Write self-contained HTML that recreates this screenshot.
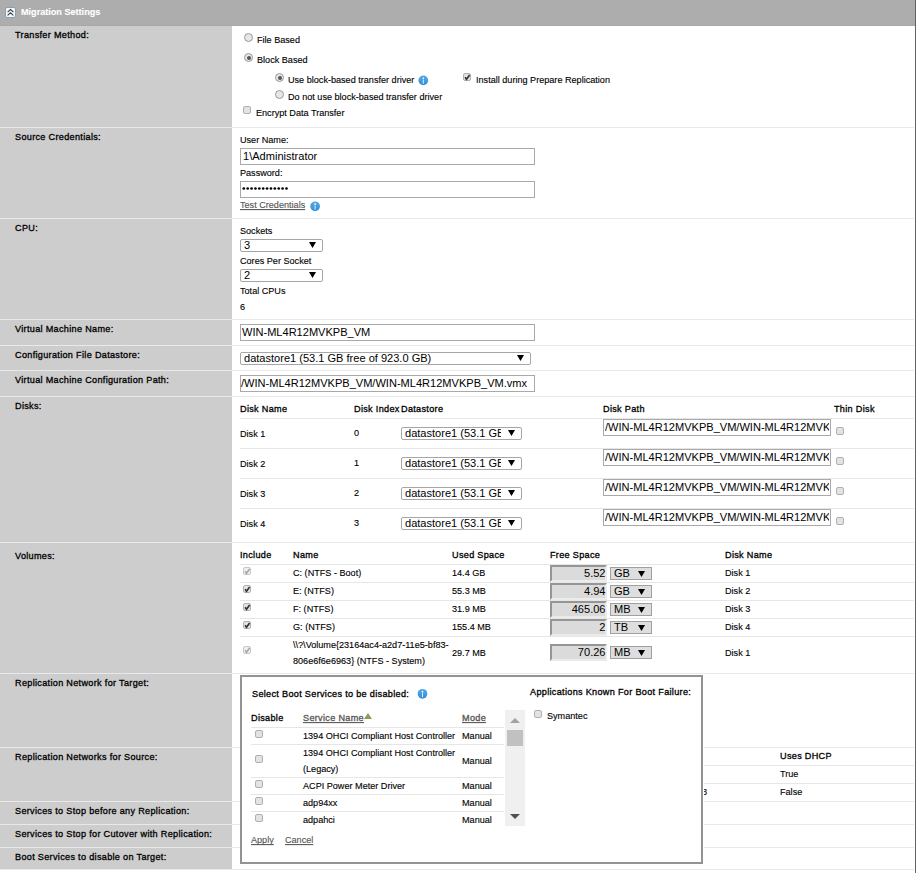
<!DOCTYPE html><html><head><meta charset="utf-8"><style>
html,body{margin:0;padding:0;background:#fff;}
body{width:916px;height:873px;position:relative;overflow:hidden;font-family:"Liberation Sans",sans-serif;}
.a{position:absolute;}
.t{position:absolute;font-size:9.1px;line-height:12px;white-space:nowrap;color:#000;-webkit-text-stroke:0.12px currentColor;transform:scaleY(1.06);transform-origin:0 9px;}
.t2{position:absolute;font-size:11.05px;line-height:13px;white-space:nowrap;color:#000;}
.rad{position:absolute;width:9px;height:9px;box-sizing:border-box;border:1px solid #9a9a9a;border-radius:50%;background:#e6e6e6;}
.rad i{position:absolute;left:1.5px;top:1.5px;width:4px;height:4px;border-radius:50%;background:#555;}
.cb{position:absolute;width:8px;height:8px;box-sizing:border-box;border:1px solid #b0b0b0;border-radius:2px;background:#e3e3e3;}
.cb svg{position:absolute;left:-1px;top:-1px;}
.cb.dis{border-color:#c8c8c8;background:#efefef;}
.info{position:absolute;width:10px;height:10px;}
.info svg{display:block}
.arr{position:absolute;width:7px;height:6px;}
.b{-webkit-text-stroke:0.3px currentColor;letter-spacing:0.32px;}
.u{text-decoration:underline;text-decoration-skip-ink:none;}
</style></head><body>
<div class="a" style="left:0px;top:0px;width:915px;height:26px;background:#adadad"></div>
<div class="a" style="left:0px;top:25px;width:915px;height:1px;background:#a8a8a8"></div>
<div class="a" style="left:5px;top:7px;width:11px;height:11px;box-sizing:border-box;border:1px solid #8aa0b0;border-radius:2px;background:#f2f7fb"><svg width="9" height="9" viewBox="0 0 9 9" style="position:absolute;left:0;top:0"><path d="M1.6 4.2 L4.5 1.6 L7.4 4.2 M1.6 7.4 L4.5 4.8 L7.4 7.4" fill="none" stroke="#404040" stroke-width="1.1"/></svg></div>
<div class="t" style="left:21px;top:6px;color:#fff;font-weight:bold">Migration Settings</div>
<div class="a" style="left:0px;top:26px;width:232px;height:843px;background:#cdcdcd"></div>
<div class="a" style="left:915px;top:0px;width:1px;height:873px;background:#616161"></div>
<div class="a" style="left:0px;top:127px;width:914px;height:1px;background:#e9e9e9"></div>
<div class="a" style="left:0px;top:218px;width:914px;height:1px;background:#e9e9e9"></div>
<div class="a" style="left:0px;top:319px;width:914px;height:1px;background:#e9e9e9"></div>
<div class="a" style="left:0px;top:345px;width:914px;height:1px;background:#e9e9e9"></div>
<div class="a" style="left:0px;top:370px;width:914px;height:1px;background:#e9e9e9"></div>
<div class="a" style="left:0px;top:396px;width:914px;height:1px;background:#e9e9e9"></div>
<div class="a" style="left:0px;top:542px;width:914px;height:1px;background:#e9e9e9"></div>
<div class="a" style="left:0px;top:673px;width:914px;height:1px;background:#e9e9e9"></div>
<div class="a" style="left:0px;top:747px;width:914px;height:1px;background:#e9e9e9"></div>
<div class="a" style="left:0px;top:801px;width:914px;height:1px;background:#e9e9e9"></div>
<div class="a" style="left:0px;top:824px;width:914px;height:1px;background:#e9e9e9"></div>
<div class="a" style="left:0px;top:847px;width:914px;height:1px;background:#e9e9e9"></div>
<div class="a" style="left:0px;top:869px;width:914px;height:1px;background:#e9e9e9"></div>
<div class="t b" style="left:15px;top:29px;">Transfer Method:</div>
<div class="t b" style="left:15px;top:131px;">Source Credentials:</div>
<div class="t b" style="left:15px;top:222px;">CPU:</div>
<div class="t b" style="left:15px;top:323px;">Virtual Machine Name:</div>
<div class="t b" style="left:15px;top:349px;">Configuration File Datastore:</div>
<div class="t b" style="left:15px;top:374px;">Virtual Machine Configuration Path:</div>
<div class="t b" style="left:15px;top:400px;">Disks:</div>
<div class="t b" style="left:15px;top:550px;">Volumes:</div>
<div class="t b" style="left:15px;top:677px;">Replication Network for Target:</div>
<div class="t b" style="left:15px;top:751px;">Replication Networks for Source:</div>
<div class="t b" style="left:15px;top:805px;">Services to Stop before any Replication:</div>
<div class="t b" style="left:15px;top:828px;">Services to Stop for Cutover with Replication:</div>
<div class="t b" style="left:15px;top:851px;">Boot Services to disable on Target:</div>
<div class="rad" style="left:244px;top:33px"></div>
<div class="t" style="left:257px;top:34px;">File Based</div>
<div class="rad" style="left:244px;top:53px"><i></i></div>
<div class="t" style="left:257px;top:54px;">Block Based</div>
<div class="rad" style="left:275px;top:73px"><i></i></div>
<div class="t" style="left:288px;top:74px;">Use block-based transfer driver</div>
<svg class="a" style="left:417px;top:74px" width="12" height="12" viewBox="0 0 12 12"><defs><linearGradient id="ig1" x1="0" y1="0" x2="0" y2="1"><stop offset="0" stop-color="#5aa9e4"/><stop offset="1" stop-color="#2f8fd8"/></linearGradient></defs><circle cx="6.30" cy="6.40" r="4.85" fill="url(#ig1)"/><circle cx="6.30" cy="4.30" r="0.85" fill="#fff"/><rect x="5.80" y="5.80" width="1" height="3.9" fill="#fff" fill-opacity="0.85"/></svg>
<div class="cb" style="left:463px;top:73px"><svg width="8" height="8" viewBox="0 0 8 8"><path d="M2.1 4.3 L3.5 6.3 L6.6 2.0" fill="none" stroke="#333" stroke-width="1.6"/></svg></div>
<div class="t" style="left:476px;top:74px;">Install during Prepare Replication</div>
<div class="rad" style="left:275px;top:90px"></div>
<div class="t" style="left:288px;top:91px;">Do not use block-based transfer driver</div>
<div class="cb" style="left:243px;top:106px"></div>
<div class="t" style="left:256px;top:107px;">Encrypt Data Transfer</div>
<div class="t" style="left:240px;top:134px;">User Name:</div>
<div class="a" style="left:240px;top:148px;width:295px;height:17px;border:1px solid #a9a9a9;box-sizing:border-box;background:#fff"></div>
<div class="t2" style="left:243px;top:150px;">1\Administrator</div>
<div class="t" style="left:240px;top:167px;">Password:</div>
<div class="a" style="left:240px;top:181px;width:295px;height:17px;border:1px solid #a9a9a9;box-sizing:border-box;background:#fff"></div>
<svg class="a" style="left:240px;top:184px" width="60" height="9"><circle cx="3.80" cy="4.5" r="1.35" fill="#000"/><circle cx="7.68" cy="4.5" r="1.35" fill="#000"/><circle cx="11.56" cy="4.5" r="1.35" fill="#000"/><circle cx="15.44" cy="4.5" r="1.35" fill="#000"/><circle cx="19.32" cy="4.5" r="1.35" fill="#000"/><circle cx="23.20" cy="4.5" r="1.35" fill="#000"/><circle cx="27.08" cy="4.5" r="1.35" fill="#000"/><circle cx="30.96" cy="4.5" r="1.35" fill="#000"/><circle cx="34.84" cy="4.5" r="1.35" fill="#000"/><circle cx="38.72" cy="4.5" r="1.35" fill="#000"/><circle cx="42.60" cy="4.5" r="1.35" fill="#000"/><circle cx="46.48" cy="4.5" r="1.35" fill="#000"/></svg>
<div class="t u" style="left:240px;top:199px;color:#555;">Test Credentials</div>
<svg class="a" style="left:309px;top:200px" width="12" height="12" viewBox="0 0 12 12"><defs><linearGradient id="ig2" x1="0" y1="0" x2="0" y2="1"><stop offset="0" stop-color="#5aa9e4"/><stop offset="1" stop-color="#2f8fd8"/></linearGradient></defs><circle cx="6.10" cy="6.25" r="4.85" fill="url(#ig2)"/><circle cx="6.10" cy="4.15" r="0.85" fill="#fff"/><rect x="5.60" y="5.65" width="1" height="3.9" fill="#fff" fill-opacity="0.85"/></svg>
<div class="t" style="left:240px;top:225px;">Sockets</div>
<div class="a" style="left:240px;top:239px;width:83px;height:13px;border:1px solid #a6a6a6;box-sizing:border-box;background:#fff;border-radius:2px"></div>
<div class="t2" style="left:244px;top:239px;">3</div>
<svg class="arr" style="left:309px;top:242px" viewBox="0 0 7 6"><path d="M0 0H7L3.5 6Z" fill="#000"/></svg>
<div class="t" style="left:240px;top:255px;">Cores Per Socket</div>
<div class="a" style="left:240px;top:269px;width:83px;height:13px;border:1px solid #a6a6a6;box-sizing:border-box;background:#fff;border-radius:2px"></div>
<div class="t2" style="left:244px;top:269px;">2</div>
<svg class="arr" style="left:309px;top:272px" viewBox="0 0 7 6"><path d="M0 0H7L3.5 6Z" fill="#000"/></svg>
<div class="t" style="left:240px;top:285px;">Total CPUs</div>
<div class="t" style="left:240px;top:301px;">6</div>
<div class="a" style="left:240px;top:324px;width:295px;height:17px;border:1px solid #a9a9a9;box-sizing:border-box;background:#fff"></div>
<div class="t2" style="left:242px;top:326px;">WIN-ML4R12MVKPB_VM</div>
<div class="a" style="left:240px;top:352px;width:291px;height:13px;border:1px solid #a6a6a6;box-sizing:border-box;background:#fff;border-radius:2px"></div>
<div class="t2" style="left:244px;top:352px;">datastore1 (53.1 GB free of 923.0 GB)</div>
<svg class="arr" style="left:517px;top:355px" viewBox="0 0 7 6"><path d="M0 0H7L3.5 6Z" fill="#000"/></svg>
<div class="a" style="left:240px;top:375px;width:295px;height:17px;border:1px solid #a9a9a9;box-sizing:border-box;background:#fff"></div>
<div class="t2" style="left:241px;top:377px;">/WIN-ML4R12MVKPB_VM/WIN-ML4R12MVKPB_VM.vmx</div>
<div class="t b" style="left:240px;top:403px;">Disk Name</div>
<div class="t b" style="left:354px;top:403px;">Disk Index</div>
<div class="t b" style="left:401px;top:403px;">Datastore</div>
<div class="t b" style="left:603px;top:403px;">Disk Path</div>
<div class="t b" style="left:834px;top:403px;">Thin Disk</div>
<div class="a" style="left:240px;top:418px;width:674px;height:1px;background:#e6e6e6"></div>
<div class="t" style="left:240px;top:428px;">Disk 1</div>
<div class="t" style="left:354px;top:427px;">0</div>
<div class="a" style="left:401px;top:427px;width:121px;height:13px;border:1px solid #a6a6a6;box-sizing:border-box;background:#fff;border-radius:2px"></div>
<div class="t2" style="left:405px;top:427px;width:96px;overflow:hidden;">datastore1 (53.1 GB</div>
<svg class="arr" style="left:508px;top:430px" viewBox="0 0 7 6"><path d="M0 0H7L3.5 6Z" fill="#000"/></svg>
<div class="a" style="left:603px;top:419px;width:228px;height:17px;border:1px solid #a9a9a9;box-sizing:border-box;background:#fff"></div>
<div class="t2" style="left:605px;top:421px;width:224px;overflow:hidden">/WIN-ML4R12MVKPB_VM/WIN-ML4R12MVKPB_VM.vmx</div>
<div class="cb" style="left:836px;top:427px"></div>
<div class="a" style="left:240px;top:448px;width:674px;height:1px;background:#e6e6e6"></div>
<div class="t" style="left:240px;top:458px;">Disk 2</div>
<div class="t" style="left:354px;top:457px;">1</div>
<div class="a" style="left:401px;top:457px;width:121px;height:13px;border:1px solid #a6a6a6;box-sizing:border-box;background:#fff;border-radius:2px"></div>
<div class="t2" style="left:405px;top:457px;width:96px;overflow:hidden;">datastore1 (53.1 GB</div>
<svg class="arr" style="left:508px;top:460px" viewBox="0 0 7 6"><path d="M0 0H7L3.5 6Z" fill="#000"/></svg>
<div class="a" style="left:603px;top:449px;width:228px;height:17px;border:1px solid #a9a9a9;box-sizing:border-box;background:#fff"></div>
<div class="t2" style="left:605px;top:451px;width:224px;overflow:hidden">/WIN-ML4R12MVKPB_VM/WIN-ML4R12MVKPB_VM.vmx</div>
<div class="cb" style="left:836px;top:457px"></div>
<div class="a" style="left:240px;top:478px;width:674px;height:1px;background:#e6e6e6"></div>
<div class="t" style="left:240px;top:488px;">Disk 3</div>
<div class="t" style="left:354px;top:487px;">2</div>
<div class="a" style="left:401px;top:487px;width:121px;height:13px;border:1px solid #a6a6a6;box-sizing:border-box;background:#fff;border-radius:2px"></div>
<div class="t2" style="left:405px;top:487px;width:96px;overflow:hidden;">datastore1 (53.1 GB</div>
<svg class="arr" style="left:508px;top:490px" viewBox="0 0 7 6"><path d="M0 0H7L3.5 6Z" fill="#000"/></svg>
<div class="a" style="left:603px;top:479px;width:228px;height:17px;border:1px solid #a9a9a9;box-sizing:border-box;background:#fff"></div>
<div class="t2" style="left:605px;top:481px;width:224px;overflow:hidden">/WIN-ML4R12MVKPB_VM/WIN-ML4R12MVKPB_VM.vmx</div>
<div class="cb" style="left:836px;top:487px"></div>
<div class="a" style="left:240px;top:508px;width:674px;height:1px;background:#e6e6e6"></div>
<div class="t" style="left:240px;top:518px;">Disk 4</div>
<div class="t" style="left:354px;top:517px;">3</div>
<div class="a" style="left:401px;top:517px;width:121px;height:13px;border:1px solid #a6a6a6;box-sizing:border-box;background:#fff;border-radius:2px"></div>
<div class="t2" style="left:405px;top:517px;width:96px;overflow:hidden;">datastore1 (53.1 GB</div>
<svg class="arr" style="left:508px;top:520px" viewBox="0 0 7 6"><path d="M0 0H7L3.5 6Z" fill="#000"/></svg>
<div class="a" style="left:603px;top:509px;width:228px;height:17px;border:1px solid #a9a9a9;box-sizing:border-box;background:#fff"></div>
<div class="t2" style="left:605px;top:511px;width:224px;overflow:hidden">/WIN-ML4R12MVKPB_VM/WIN-ML4R12MVKPB_VM.vmx</div>
<div class="cb" style="left:836px;top:517px"></div>
<div class="t b" style="left:240px;top:549px;">Include</div>
<div class="t b" style="left:293px;top:549px;">Name</div>
<div class="t b" style="left:452px;top:549px;">Used Space</div>
<div class="t b" style="left:550px;top:549px;">Free Space</div>
<div class="t b" style="left:725px;top:549px;">Disk Name</div>
<div class="a" style="left:240px;top:564px;width:674px;height:1px;background:#e6e6e6"></div>
<div class="cb dis" style="left:243px;top:567px"><svg width="8" height="8" viewBox="0 0 8 8"><path d="M2.1 4.3 L3.5 6.3 L6.6 2.0" fill="none" stroke="#a8a8a8" stroke-width="1.6"/></svg></div>
<div class="t" style="left:293px;top:567px;">C: (NTFS - Boot)</div>
<div class="t" style="left:452px;top:567px;">14.4 GB</div>
<div class="a" style="left:550px;top:565px;width:57px;height:17px;background:#dbdbdb;border-top:2px solid #959595;border-left:2px solid #959595;border-right:2px solid #ebebeb;border-bottom:2px solid #ebebeb;box-sizing:border-box"></div>
<div class="t2" style="left:550px;top:567px;width:55.5px;text-align:right">5.52</div>
<div class="a" style="left:610px;top:567px;width:42px;height:13px;background:#dedede;border:1px solid #a0a0a0;box-sizing:border-box"></div>
<div class="t2" style="left:614px;top:567px;">GB</div>
<svg class="arr" style="left:638px;top:571px" viewBox="0 0 7 6"><path d="M0 0H7L3.5 6Z" fill="#000"/></svg>
<div class="t" style="left:725px;top:567px;">Disk 1</div>
<div class="a" style="left:240px;top:582px;width:674px;height:1px;background:#e6e6e6"></div>
<div class="cb" style="left:243px;top:585px"><svg width="8" height="8" viewBox="0 0 8 8"><path d="M2.1 4.3 L3.5 6.3 L6.6 2.0" fill="none" stroke="#333" stroke-width="1.6"/></svg></div>
<div class="t" style="left:293px;top:585px;">E: (NTFS)</div>
<div class="t" style="left:452px;top:585px;">55.3 MB</div>
<div class="a" style="left:550px;top:583px;width:57px;height:17px;background:#dbdbdb;border-top:2px solid #959595;border-left:2px solid #959595;border-right:2px solid #ebebeb;border-bottom:2px solid #ebebeb;box-sizing:border-box"></div>
<div class="t2" style="left:550px;top:585px;width:55.5px;text-align:right">4.94</div>
<div class="a" style="left:610px;top:585px;width:42px;height:13px;background:#dedede;border:1px solid #a0a0a0;box-sizing:border-box"></div>
<div class="t2" style="left:614px;top:585px;">GB</div>
<svg class="arr" style="left:638px;top:589px" viewBox="0 0 7 6"><path d="M0 0H7L3.5 6Z" fill="#000"/></svg>
<div class="t" style="left:725px;top:585px;">Disk 2</div>
<div class="a" style="left:240px;top:600px;width:674px;height:1px;background:#e6e6e6"></div>
<div class="cb" style="left:243px;top:603px"><svg width="8" height="8" viewBox="0 0 8 8"><path d="M2.1 4.3 L3.5 6.3 L6.6 2.0" fill="none" stroke="#333" stroke-width="1.6"/></svg></div>
<div class="t" style="left:293px;top:603px;">F: (NTFS)</div>
<div class="t" style="left:452px;top:603px;">31.9 MB</div>
<div class="a" style="left:550px;top:601px;width:57px;height:17px;background:#dbdbdb;border-top:2px solid #959595;border-left:2px solid #959595;border-right:2px solid #ebebeb;border-bottom:2px solid #ebebeb;box-sizing:border-box"></div>
<div class="t2" style="left:550px;top:603px;width:55.5px;text-align:right">465.06</div>
<div class="a" style="left:610px;top:603px;width:42px;height:13px;background:#dedede;border:1px solid #a0a0a0;box-sizing:border-box"></div>
<div class="t2" style="left:614px;top:603px;">MB</div>
<svg class="arr" style="left:638px;top:607px" viewBox="0 0 7 6"><path d="M0 0H7L3.5 6Z" fill="#000"/></svg>
<div class="t" style="left:725px;top:603px;">Disk 3</div>
<div class="a" style="left:240px;top:618px;width:674px;height:1px;background:#e6e6e6"></div>
<div class="cb" style="left:243px;top:621px"><svg width="8" height="8" viewBox="0 0 8 8"><path d="M2.1 4.3 L3.5 6.3 L6.6 2.0" fill="none" stroke="#333" stroke-width="1.6"/></svg></div>
<div class="t" style="left:293px;top:621px;">G: (NTFS)</div>
<div class="t" style="left:452px;top:621px;">155.4 MB</div>
<div class="a" style="left:550px;top:619px;width:57px;height:17px;background:#dbdbdb;border-top:2px solid #959595;border-left:2px solid #959595;border-right:2px solid #ebebeb;border-bottom:2px solid #ebebeb;box-sizing:border-box"></div>
<div class="t2" style="left:550px;top:621px;width:55.5px;text-align:right">2</div>
<div class="a" style="left:610px;top:621px;width:42px;height:13px;background:#dedede;border:1px solid #a0a0a0;box-sizing:border-box"></div>
<div class="t2" style="left:614px;top:621px;">TB</div>
<svg class="arr" style="left:638px;top:625px" viewBox="0 0 7 6"><path d="M0 0H7L3.5 6Z" fill="#000"/></svg>
<div class="t" style="left:725px;top:621px;">Disk 4</div>
<div class="a" style="left:240px;top:636px;width:674px;height:1px;background:#e6e6e6"></div>
<div class="cb dis" style="left:243px;top:646px"><svg width="8" height="8" viewBox="0 0 8 8"><path d="M2.1 4.3 L3.5 6.3 L6.6 2.0" fill="none" stroke="#a8a8a8" stroke-width="1.6"/></svg></div>
<div class="t" style="left:293px;top:639px;">\\?\Volume{23164ac4-a2d7-11e5-bf83-</div>
<div class="t" style="left:293px;top:655px;">806e6f6e6963} (NTFS - System)</div>
<div class="t" style="left:452px;top:647px;">29.7 MB</div>
<div class="a" style="left:550px;top:644px;width:57px;height:17px;background:#dbdbdb;border-top:2px solid #959595;border-left:2px solid #959595;border-right:2px solid #ebebeb;border-bottom:2px solid #ebebeb;box-sizing:border-box"></div>
<div class="t2" style="left:550px;top:646px;width:55.5px;text-align:right">70.26</div>
<div class="a" style="left:610px;top:646px;width:42px;height:13px;background:#dedede;border:1px solid #a0a0a0;box-sizing:border-box"></div>
<div class="t2" style="left:614px;top:646px;">MB</div>
<svg class="arr" style="left:638px;top:650px" viewBox="0 0 7 6"><path d="M0 0H7L3.5 6Z" fill="#000"/></svg>
<div class="t" style="left:725px;top:647px;">Disk 1</div>
<div class="t b" style="left:780px;top:750px;">Uses DHCP</div>
<div class="a" style="left:704px;top:765px;width:210px;height:1px;background:#e6e6e6"></div>
<div class="t" style="left:780px;top:768px;">True</div>
<div class="a" style="left:704px;top:783px;width:210px;height:1px;background:#e6e6e6"></div>
<div class="t" style="left:780px;top:786px;">False</div>
<div class="a" style="left:703px;top:786px;width:6px;height:12px;overflow:hidden"><div class="t" style="left:-1px;top:0">8</div></div>
<div class="a" style="left:240px;top:675px;width:463px;height:189px;border:2px solid #939393;box-sizing:border-box;background:#fff"></div>
<div class="a" style="left:703px;top:676px;width:1px;height:189px;background:#fff"></div>
<div class="t b" style="left:252px;top:688px;">Select Boot Services to be disabled:</div>
<svg class="a" style="left:416px;top:687px" width="12" height="12" viewBox="0 0 12 12"><defs><linearGradient id="ig3" x1="0" y1="0" x2="0" y2="1"><stop offset="0" stop-color="#5aa9e4"/><stop offset="1" stop-color="#2f8fd8"/></linearGradient></defs><circle cx="6.50" cy="6.80" r="4.85" fill="url(#ig3)"/><circle cx="6.50" cy="4.70" r="0.85" fill="#fff"/><rect x="6.00" y="6.20" width="1" height="3.9" fill="#fff" fill-opacity="0.85"/></svg>
<div class="t b" style="left:530px;top:686px;">Applications Known For Boot Failure:</div>
<div class="cb" style="left:534px;top:710px"></div>
<div class="t" style="left:547px;top:710px;">Symantec</div>
<div class="t b" style="left:251px;top:712px;">Disable</div>
<div class="t u b" style="left:303px;top:712px;color:#555;">Service Name</div>
<div class="a" style="left:364px;top:713px;width:0;height:0;border-left:4px solid transparent;border-right:4px solid transparent;border-bottom:6px solid #8d9a5a"></div>
<div class="t u b" style="left:462px;top:712px;color:#555;">Mode</div>
<div class="a" style="left:251px;top:727px;width:253px;height:1px;background:#e6e6e6"></div>
<div class="a" style="left:251px;top:744px;width:253px;height:1px;background:#e6e6e6"></div>
<div class="a" style="left:251px;top:777px;width:253px;height:1px;background:#e6e6e6"></div>
<div class="a" style="left:251px;top:794px;width:253px;height:1px;background:#e6e6e6"></div>
<div class="a" style="left:251px;top:811px;width:253px;height:1px;background:#e6e6e6"></div>
<div class="cb" style="left:255px;top:730px"></div>
<div class="t" style="left:303px;top:730px;">1394 OHCI Compliant Host Controller</div>
<div class="t" style="left:462px;top:730px;">Manual</div>
<div class="cb" style="left:255px;top:755px"></div>
<div class="t" style="left:303px;top:747px;">1394 OHCI Compliant Host Controller</div>
<div class="t" style="left:303px;top:763px;">(Legacy)</div>
<div class="t" style="left:462px;top:755px;">Manual</div>
<div class="cb" style="left:255px;top:780px"></div>
<div class="t" style="left:303px;top:780px;">ACPI Power Meter Driver</div>
<div class="t" style="left:462px;top:780px;">Manual</div>
<div class="cb" style="left:255px;top:797px"></div>
<div class="t" style="left:303px;top:797px;">adp94xx</div>
<div class="t" style="left:462px;top:797px;">Manual</div>
<div class="cb" style="left:255px;top:814px"></div>
<div class="t" style="left:303px;top:814px;">adpahci</div>
<div class="t" style="left:462px;top:814px;">Manual</div>
<div class="a" style="left:505px;top:710px;width:20px;height:116px;background:#f0f0f0"></div>
<div class="a" style="left:510px;top:718px;width:0;height:0;border-left:5px solid transparent;border-right:5px solid transparent;border-bottom:5px solid #a3a3a3"></div>
<div class="a" style="left:507px;top:730px;width:16px;height:16px;background:#c1c1c1"></div>
<div class="a" style="left:510px;top:814px;width:0;height:0;border-left:5px solid transparent;border-right:5px solid transparent;border-top:5px solid #505050"></div>
<div class="t u" style="left:251px;top:834px;color:#555;">Apply</div>
<div class="t u" style="left:285px;top:834px;color:#555;">Cancel</div>
</body></html>
